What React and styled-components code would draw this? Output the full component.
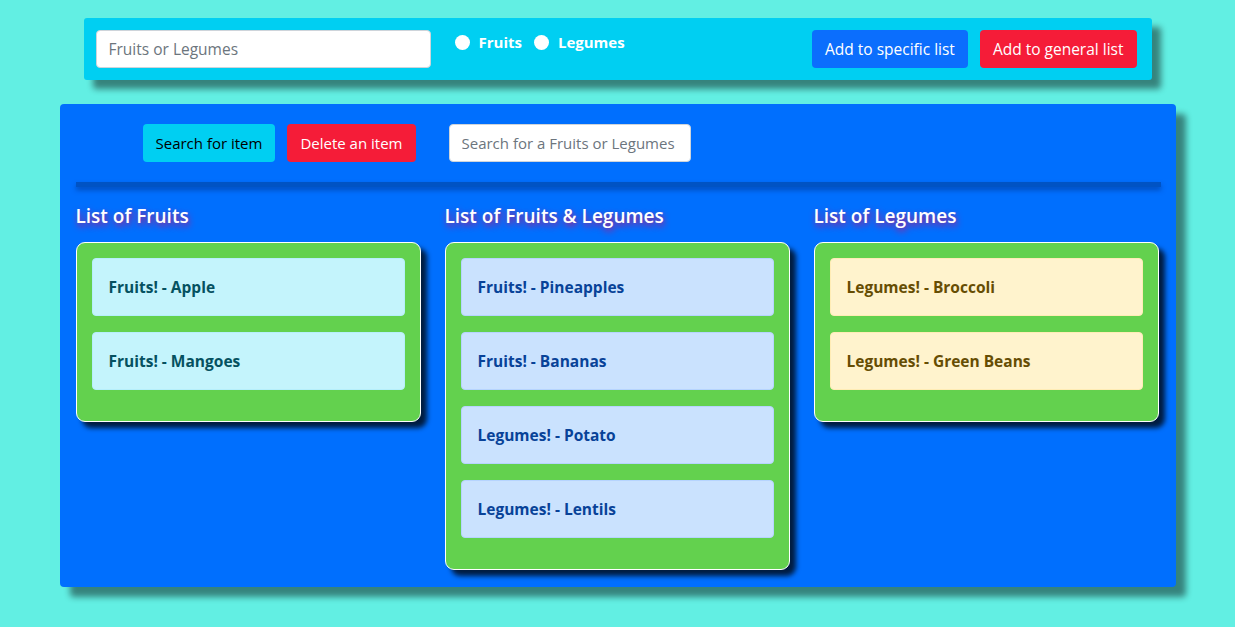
import React, { useState } from 'react';
import styled, { createGlobalStyle } from 'styled-components';

const GlobalStyle = createGlobalStyle`
  body {
    margin: 0;
    background: #62efe3;
    font-family: "Segoe UI", "Open Sans", "Noto Sans", sans-serif;
  }
  * { box-sizing: border-box; }
`;

const Page = styled.div`
  padding: 18px 0 30px;
  display: flex;
  flex-direction: column;
  align-items: center;
  gap: 24px;
`;

// barre du haut : champ + radios + boutons d'ajout
const TopBar = styled.div`
  width: 1068px;
  height: 62px;
  background: #00cff2;
  border-radius: 3px;
  padding: 12px 15px 12px 12px;
  display: flex;
  align-items: flex-start;
  box-shadow: 9px 9px 6px rgba(0, 0, 0, 0.45);
`;

const Input = styled.input`
  width: ${props => props.width}px;
  height: 38px;
  margin-left: ${props => props.ml || 0}px;
  border: 1px solid #ced4da;
  border-radius: 4px;
  padding: 0 12px;
  font-family: inherit;
  font-size: ${props => (props.small ? 15 : 15.5)}px;
  color: #212529;
  background: #fff;
  &::placeholder { color: #6c757d; }
`;

const RadioGroup = styled.div`
  display: flex;
  align-items: center;
  margin-left: 24px;
  margin-top: 2px;
  gap: 12px;
`;

const RadioLabel = styled.label`
  display: flex;
  align-items: center;
  gap: 9px;
  color: #fff;
  font-weight: 700;
  font-size: 15px;
`;

const RadioDot = styled.span`
  width: 15px;
  height: 15px;
  border-radius: 50%;
  background: #fff;
  display: inline-block;
`;

const Spacer = styled.div`
  flex: 1;
`;

const Button = styled.button`
  height: 38px;
  padding: 0 13px;
  border: none;
  border-radius: 4px;
  font-family: inherit;
  font-size: ${props => (props.small ? 15 : 15.5)}px;
  color: ${props => (props.kind === 'info' ? '#000' : '#fff')};
  background: ${props => props.kind === 'info' ? '#00cff2' : props.kind === 'danger' ? '#f51c38' : '#0b6efd'};
  margin-left: ${props => props.ml || 0}px;
  cursor: pointer;
`;

// panneau principal
const Panel = styled.div`
  width: 1116px;
  background: #006ffe;
  border-radius: 4px;
  padding: 20px 15px 17px 16px;
  box-shadow: 10px 10px 6px rgba(0, 0, 0, 0.45);
`;

const Toolbar = styled.div`
  display: flex;
  margin-left: 67px;
`;

const Divider = styled.div`
  height: 5px;
  margin-top: 20px;
  background: #0053c4;
  box-shadow: 0 3px 5px rgba(0, 40, 120, 0.5);
`;

const Columns = styled.div`
  display: grid;
  grid-template-columns: repeat(3, 345px);
  column-gap: 24px;
  align-items: start;
  margin-top: 17px;
`;

const Column = styled.div`
  display: flex;
  flex-direction: column;
`;

const Heading = styled.h2`
  margin: 0 0 14px;
  font-size: 19px;
  line-height: 24px;
  font-weight: 600;
  color: #fff;
  text-shadow: 1px 3px 6px #c0107a;
`;

const Card = styled.div`
  background: #63d14e;
  border: 1px solid #fff;
  border-radius: 9px;
  padding: 15px;
  box-shadow: 6px 6px 5px rgba(0, 0, 0, 0.75);
`;

const COLORS = {
  info: { bg: '#c4f4fc', fg: '#055160', border: '#b6effb' },
  primary: { bg: '#cae2fe', fg: '#084298', border: '#b6d4fe' },
  warning: { bg: '#fff3cd', fg: '#664d03', border: '#ffecb5' },
};

const Item = styled.div`
  height: 58px;
  margin-bottom: 16px;
  padding: 0 16px;
  display: flex;
  align-items: center;
  border-radius: 4px;
  border: 1px solid ${props => COLORS[props.kind].border};
  background: ${props => COLORS[props.kind].bg};
  color: ${props => COLORS[props.kind].fg};
  font-weight: 700;
  font-size: 15.5px;
`;

const lists = [
  { title: 'List of Fruits', kind: 'info', items: ['Fruits! - Apple', 'Fruits! - Mangoes'] },
  {
    title: 'List of Fruits & Legumes',
    kind: 'primary',
    items: ['Fruits! - Pineapples', 'Fruits! - Bananas', 'Legumes! - Potato', 'Legumes! - Lentils'],
  },
  { title: 'List of Legumes', kind: 'warning', items: ['Legumes! - Broccoli', 'Legumes! - Green Beans'] },
];

const App = () => {
  const [value, setValue] = useState('');
  const [search, setSearch] = useState('');

  return (
    <>
      <GlobalStyle />
      <Page>
        <TopBar>
          <Input width={335} placeholder="Fruits or Legumes" value={value} onChange={e => setValue(e.target.value)} />
          <RadioGroup>
            <RadioLabel><RadioDot />Fruits</RadioLabel>
            <RadioLabel><RadioDot />Legumes</RadioLabel>
          </RadioGroup>
          <Spacer />
          <Button>Add to specific list</Button>
          <Button kind="danger" ml={12}>Add to general list</Button>
        </TopBar>

        <Panel>
          <Toolbar>
            <Button kind="info" small>Search for item</Button>
            <Button kind="danger" small ml={12}>Delete an item</Button>
            <Input width={242} ml={33} small placeholder="Search for a Fruits or Legumes" value={search} onChange={e => setSearch(e.target.value)} />
          </Toolbar>
          <Divider />
          <Columns>
            {lists.map(list => (
              <Column key={list.title}>
                <Heading>{list.title}</Heading>
                <Card>
                  {list.items.map(item => (
                    <Item key={item} kind={list.kind}>{item}</Item>
                  ))}
                </Card>
              </Column>
            ))}
          </Columns>
        </Panel>
      </Page>
    </>
  );
};

export default App;
